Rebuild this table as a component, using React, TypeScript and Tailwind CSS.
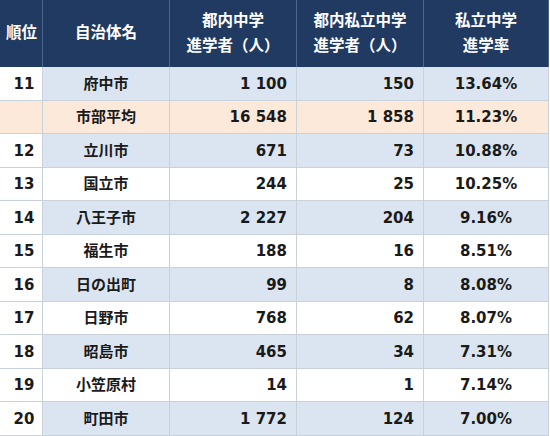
import React from "react";

type Row = { rank: string; name: string; a: string; b: string; r: string; kind: "blue" | "white" | "peach" };

const rows: Row[] = [
  { rank: "11", name: "府中市", a: "1 100", b: "150", r: "13.64%", kind: "blue" },
  { rank: "", name: "市部平均", a: "16 548", b: "1 858", r: "11.23%", kind: "peach" },
  { rank: "12", name: "立川市", a: "671", b: "73", r: "10.88%", kind: "blue" },
  { rank: "13", name: "国立市", a: "244", b: "25", r: "10.25%", kind: "white" },
  { rank: "14", name: "八王子市", a: "2 227", b: "204", r: "9.16%", kind: "blue" },
  { rank: "15", name: "福生市", a: "188", b: "16", r: "8.51%", kind: "white" },
  { rank: "16", name: "日の出町", a: "99", b: "8", r: "8.08%", kind: "blue" },
  { rank: "17", name: "日野市", a: "768", b: "62", r: "8.07%", kind: "white" },
  { rank: "18", name: "昭島市", a: "465", b: "34", r: "7.31%", kind: "blue" },
  { rank: "19", name: "小笠原村", a: "14", b: "1", r: "7.14%", kind: "white" },
  { rank: "20", name: "町田市", a: "1 772", b: "124", r: "7.00%", kind: "blue" },
];

export default function App() {
  const font = { fontFamily: '"DejaVu Sans", "Noto Sans CJK JP", sans-serif' };
  return (
    <div className="w-[550px] h-[436px] bg-white overflow-hidden" style={font}>
      <div className="grid grid-cols-[43px_127px_127px_127px_125px] w-[549px] text-[15px] font-bold">
        {/* header */}
        <div className="h-[67px] bg-[#203a62] text-white border-r border-[#4d6690] flex items-center justify-center pl-[1px] text-[15.5px]">順位</div>
        <div className="h-[67px] bg-[#203a62] text-white border-r border-[#4d6690] flex items-center justify-center text-[15.5px]">自治体名</div>
        <div className="h-[67px] bg-[#203a62] text-white border-r border-[#4d6690] flex flex-col items-center justify-center leading-[25px] text-[15.5px]">
          <span>都内中学</span>
          <span>進学者（人）</span>
        </div>
        <div className="h-[67px] bg-[#203a62] text-white border-r border-[#4d6690] flex flex-col items-center justify-center leading-[25px] text-[15.5px]">
          <span>都内私立中学</span>
          <span>進学者（人）</span>
        </div>
        <div className="h-[67px] bg-[#203a62] text-white border-r border-[#4d6690] flex flex-col items-center justify-center leading-[25px] text-[15.5px]">
          <span>私立中学</span>
          <span>進学率</span>
        </div>
        {rows.map((row, i) => {
          const bg = row.kind === "blue" ? "bg-[#dbe5f1]" : row.kind === "peach" ? "bg-[#fde9da]" : "bg-white";
          const first = row.kind === "peach" ? "bg-[#fde9da]" : "bg-white";
          const cell = "h-[33.545px] border-r border-b border-[#c9d1da] flex items-center text-[#1a1a1a] pt-[1px]";
          return (
            <React.Fragment key={i}>
              <div className={`${cell} ${first} justify-center pl-[6px]`}>{row.rank}</div>
              <div className={`${cell} ${bg} justify-center`}>{row.name}</div>
              <div className={`${cell} ${bg} justify-end pr-[9px]`}>{row.a}</div>
              <div className={`${cell} ${bg} justify-end pr-[9px]`}>{row.b}</div>
              <div className={`${cell} ${bg} justify-center`}>{row.r}</div>
            </React.Fragment>
          );
        })}
      </div>
    </div>
  );
}
